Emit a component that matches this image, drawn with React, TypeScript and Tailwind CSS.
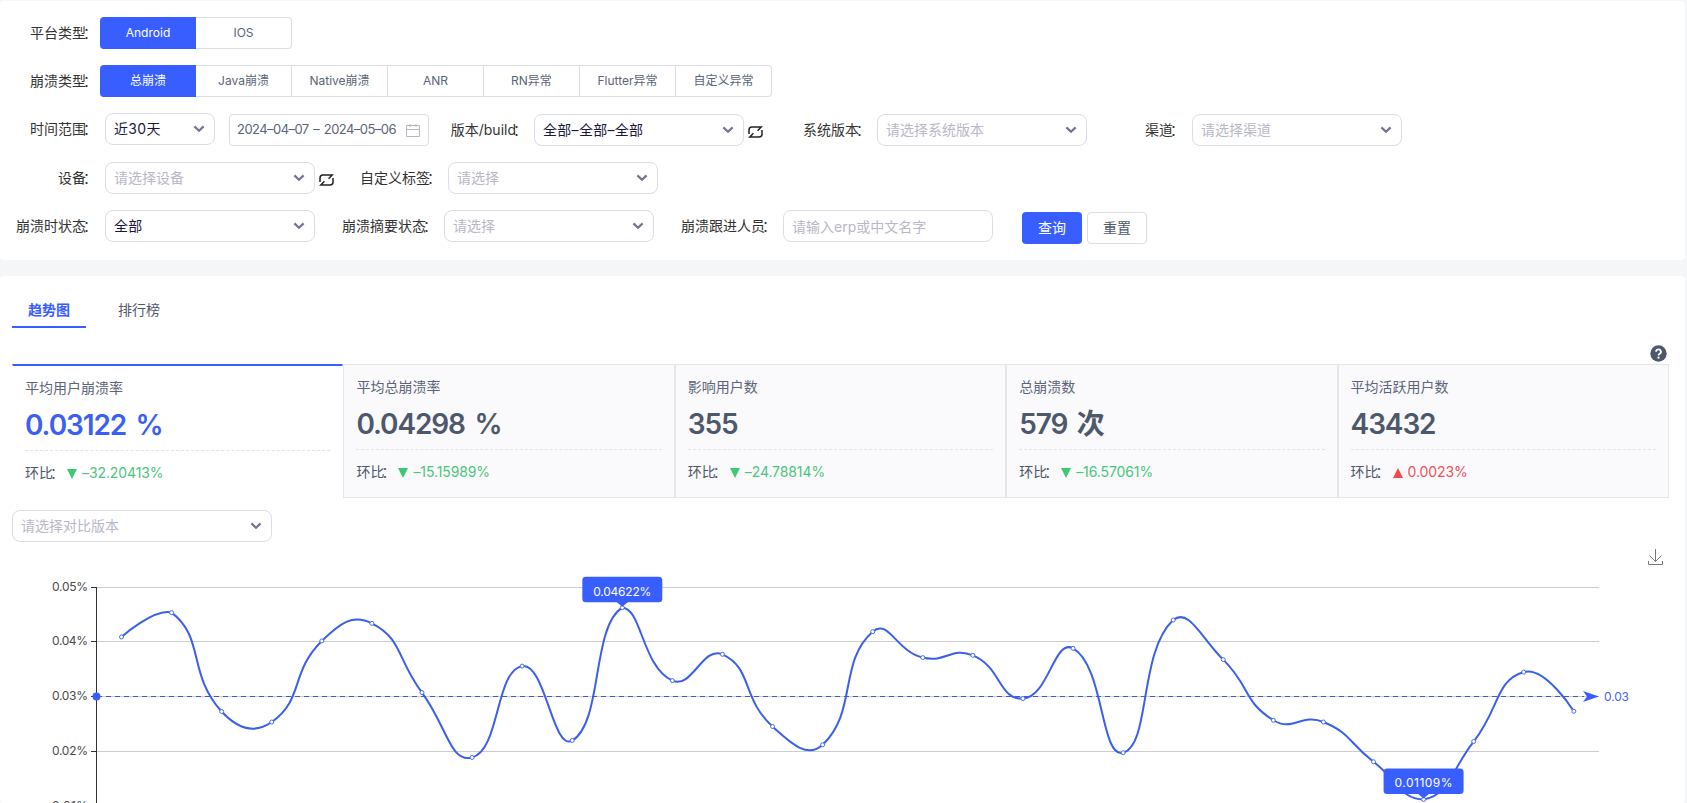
import type { ReactNode } from 'react';
import clsx from 'clsx';

const platforms = ['Android', 'IOS'];
const crashTypes = ['总崩溃', 'Java崩溃', 'Native崩溃', 'ANR', 'RN异常', 'Flutter异常', '自定义异常'];

const stats = [
  { title: '平均用户崩溃率', value: '0.03122 %', ratio: '–32.20413%', up: false },
  { title: '平均总崩溃率', value: '0.04298 %', ratio: '–15.15989%', up: false },
  { title: '影响用户数', value: '355', ratio: '–24.78814%', up: false },
  { title: '总崩溃数', value: '579 次', ratio: '–16.57061%', up: false },
  { title: '平均活跃用户数', value: '43432', ratio: '0.0023%', up: true },
];

const rates = [
  0.04085, 0.0453, 0.02719, 0.02527, 0.04012, 0.04334, 0.03067, 0.01878, 0.03551, 0.02188,
  0.04622, 0.03286, 0.03767, 0.02445, 0.0211, 0.04182, 0.03707, 0.03749, 0.02957, 0.03877,
  0.01964, 0.04396, 0.0367, 0.0256, 0.02527, 0.01799, 0.01109, 0.0217, 0.03442, 0.02725,
];

type Point = [number, number];

const toY = (rate: number) => 17 + (0.05 - rate) * 5460;
const points: Point[] = rates.map((rate, i) => [121.5 + i * 50.08, toY(rate)]);

// Bezier smoothing, control points are kept inside the bounding box of the data
function smoothPath(pts: Point[]) {
  const minY = Math.min(...pts.map((p) => p[1]));
  const maxY = Math.max(...pts.map((p) => p[1]));
  const clamp = (y: number) => Math.min(Math.max(y, minY), maxY);

  let d = `M${pts[0][0]},${pts[0][1]}`;
  let cp0: Point = pts[0];
  for (let i = 1; i < pts.length; i++) {
    const prev = pts[i - 1];
    const p = pts[i];
    const next = pts[i + 1];
    let cp1: Point = p;
    let nextCp0: Point = p;
    if (next) {
      const lenPrev = Math.hypot(p[0] - prev[0], p[1] - prev[1]);
      const lenNext = Math.hypot(next[0] - p[0], next[1] - p[1]);
      const ratio = lenNext / (lenNext + lenPrev);
      const vx = (next[0] - prev[0]) * 0.5;
      const vy = (next[1] - prev[1]) * 0.5;
      cp1 = [p[0] - vx * (1 - ratio), clamp(p[1] - vy * (1 - ratio))];
      nextCp0 = [p[0] + vx * ratio, clamp(p[1] + vy * ratio)];
    }
    d += `C${cp0[0]},${cp0[1]} ${cp1[0]},${cp1[1]} ${p[0]},${p[1]}`;
    cp0 = nextCp0;
  }
  return d;
}

function Colon() {
  return <span className="-ml-[3px] mr-[3px]">：</span>;
}

function Label({ children, className }: { children: ReactNode; className?: string }) {
  return (
    <span className={clsx('shrink-0 whitespace-nowrap text-right text-sm text-[#333333]', className)}>
      {children}
      <Colon />
    </span>
  );
}

function SegmentGroup({ items }: { items: string[] }) {
  return (
    <div className="flex h-8">
      {items.map((item, i) => (
        <button
          key={item}
          className={clsx(
            'w-24 border-y text-xs',
            i === 0
              ? 'rounded-l border-[#395eff] bg-[#395eff] text-white'
              : 'border-r border-[#dcdee2] bg-white text-[#5b6478]',
            i === items.length - 1 && 'rounded-r'
          )}
        >
          {item}
        </button>
      ))}
    </div>
  );
}

function Select({ value, placeholder, className }: { value?: string; placeholder?: string; className?: string }) {
  return (
    <div
      className={clsx(
        'flex h-8 shrink-0 items-center justify-between rounded-lg border border-[#dcdce6] bg-white pl-2 pr-[9px] text-sm',
        className
      )}
    >
      <span className={value ? 'tracking-[0.3px] text-[#1a1640]' : 'text-[#b8b8c6]'}>{value || placeholder}</span>
      <svg width="12" height="8" viewBox="0 0 12 8" fill="none">
        <path d="M1.4 1.4L6 5.8l4.6-4.4" stroke="#74758e" strokeWidth="2.2" />
      </svg>
    </div>
  );
}

function RefreshIcon() {
  return (
    <svg className="ml-1 mt-[3px] shrink-0" width="15" height="14" viewBox="0 0 15 14" fill="none" stroke="#222" strokeWidth="1.5">
      <path d="M1 9V5a3 3 0 0 1 3-3h9.2L9.6 5.8M14 5v4a3 3 0 0 1-3 3H1.8l3.6-3.8" />
    </svg>
  );
}

function Filters() {
  return (
    <section className="h-[259px] rounded-sm bg-white pl-4 pt-4">
      <div className="flex h-8 items-center">
        <Label className="w-[84px]">平台类型</Label>
        <SegmentGroup items={platforms} />
      </div>
      <div className="mt-4 flex h-8 items-center">
        <Label className="w-[84px]">崩溃类型</Label>
        <SegmentGroup items={crashTypes} />
      </div>
      <div className="mt-[17px] flex h-8 items-center">
        <Label className="-mt-0.5 w-[84px]">时间范围</Label>
        <Select value="近30天" className="-mt-0.5 ml-[5px] w-[110px]" />
        <div className="ml-3.5 flex h-8 w-[200px] items-center justify-between rounded border border-[#dcdee2] pl-[7px] pr-2">
          <span className="whitespace-nowrap text-[13px] tracking-[-0.55px] text-[#5b6478] [word-spacing:1.5px]">
            2024–04–07 – 2024–05–06
          </span>
          <svg width="14" height="13" viewBox="0 0 14 13" fill="none" stroke="#b4b9c2">
            <path d="M.5 1.5h13v11H.5zM.5 5.5h13M4 0v3M10 0v3" />
          </svg>
        </div>
        <Label className="mr-1 w-[101px]">版本/build</Label>
        <Select value="全部–全部–全部" className="w-[210px]" />
        <RefreshIcon />
        <Label className="w-[110px]">系统版本</Label>
        <Select placeholder="请选择系统版本" className="ml-1 w-[210px]" />
        <Label className="w-[100px]">渠道</Label>
        <Select placeholder="请选择渠道" className="ml-[5px] w-[210px]" />
      </div>
      <div className="mt-4 flex h-8 items-center">
        <Label className="w-[84px]">设备</Label>
        <Select placeholder="请选择设备" className="ml-[5px] w-[210px]" />
        <RefreshIcon />
        <Label className="w-[110px]">自定义标签</Label>
        <Select placeholder="请选择" className="ml-1 w-[210px]" />
      </div>
      <div className="mt-4 flex h-8 items-center">
        <Label className="w-[84px]">崩溃时状态</Label>
        <Select value="全部" className="ml-[5px] w-[210px]" />
        <Label className="w-[125px]">崩溃摘要状态</Label>
        <Select placeholder="请选择" className="ml-1 w-[210px]" />
        <Label className="w-[125px]">崩溃跟进人员</Label>
        <input
          className="ml-1 h-8 w-[210px] rounded-lg border border-[#dcdce6] px-2 text-sm placeholder:text-[#b8b8c6]"
          placeholder="请输入erp或中文名字"
        />
        <button className="ml-[29px] mt-1 h-8 w-[60px] rounded bg-[#395eff] text-sm text-white">查询</button>
        <button className="ml-[5px] mt-1 h-8 w-[60px] rounded border border-[#dcdee2] text-sm text-[#4e5969]">重置</button>
      </div>
    </section>
  );
}

function StatCard({ title, value, ratio, up, active }: (typeof stats)[number] & { active: boolean }) {
  return (
    <div
      className={clsx(
        'h-[134px] px-3',
        active
          ? 'border-x border-t-2 border-x-transparent border-t-[#395eff] bg-white'
          : 'border border-[#e6e6e8] bg-[#fafafc]'
      )}
    >
      <p className="mt-[11px] text-sm leading-[22px] text-[#5b6478]">{title}</p>
      <p
        className={clsx(
          'mt-[5px] border-b border-dashed border-[#e3e3e6] pb-1 text-[28px] leading-[42px] font-semibold tracking-[-1.1px] [word-spacing:3.5px]',
          active ? 'text-[#3b5ff5]' : 'text-[#4e586c]'
        )}
      >
        {value}
      </p>
      <div className="mt-[11px] flex items-center text-sm leading-[22px]">
        <span className="text-[#4e586c]">
          环比
          <Colon />
        </span>
        <svg className="mt-0.5 mr-[5px]" width="10" height="10" viewBox="0 0 10 10">
          {up ? <path d="M0 10L5 0l5 10z" fill="#f54a4a" /> : <path d="M0 0h10L5 10z" fill="#3dc873" />}
        </svg>
        <span className={clsx('tracking-[-0.1px]', up ? 'text-[#ea5354]' : 'text-[#4cc47b]')}>{ratio}</span>
      </div>
    </div>
  );
}

function Marker({ x, y, label }: { x: number; y: number; label: string }) {
  return (
    <g>
      <rect x={x - 40} y={y - 31} width="80" height="25.5" rx="3.5" fill="#395eff" />
      <path d={`M${x - 6},${y - 6}h12l-6,5z`} fill="#395eff" />
      <text x={x} y={y - 12} textAnchor="middle" fill="#fff" textLength="58">{label}</text>
    </g>
  );
}

function TrendChart() {
  const ticks = [0.05, 0.04, 0.03, 0.02, 0.01];
  const lines = [17.5, 71.5, 126.5, 181.5, 236];
  return (
    <svg className="block h-[233px] w-[1685px] text-xs" viewBox="0 0 1685 233">
      {lines.map((y, i) => (
        <g key={y}>
          <path d={`M97,${y}H1599`} stroke="#cccccc" />
          <path d={`M91,${y}h5`} stroke="#333" />
          <text x="88" y={y + 3.5} textAnchor="end" fill="#4a4a4a" textLength="36">{ticks[i]}%</text>
        </g>
      ))}
      <path d="M96.5,17V233" stroke="#333" />
      <path d={smoothPath(points)} fill="none" stroke="#3a5feb" strokeWidth="2" />
      {points.map(([x, y]) => (
        <circle key={x} cx={x} cy={y} r="2" fill="#fff" stroke="#4a6cf0" />
      ))}
      <path d="M97,126.5H1584" stroke="#3d5bd0" strokeDasharray="5 4" />
      <circle cx="96.5" cy="126.5" r="4" fill="#395eff" />
      <path d="M1583,121l16,5.5l-16,5.5l4,-5.5z" fill="#395eff" />
      <text x="1604" y="130.5" fill="#4464e4" textLength="25">0.03</text>
      <Marker x={points[10][0]} y={points[10][1]} label="0.04622%" />
      <Marker x={points[26][0]} y={points[26][1]} label="0.01109%" />
    </svg>
  );
}

function TrendPanel() {
  return (
    <section className="mt-4 h-[527px] overflow-hidden rounded-sm bg-white">
      <div className="ml-3 mt-[18px] flex h-[34px] text-sm">
        <button className="w-[74px] border-b-2 border-[#395eff] font-semibold text-[#395eff]">趋势图</button>
        <button className="ml-4 w-[74px] border-b-2 border-transparent text-[#4e5969]">排行榜</button>
      </div>
      <div className="mt-[17px] flex h-[19px] justify-end pr-[18px]">
        <svg width="17" height="17" viewBox="0 0 17 17">
          <circle cx="8.5" cy="8.5" r="8.2" fill="#4e586c" />
          <path d="M6.1 6.8a2.4 2.4 0 1 1 3.6 2c-.8.5-1.2.8-1.2 1.8" fill="none" stroke="#fff" strokeWidth="1.8" />
          <circle cx="8.5" cy="12.7" r="1.1" fill="#fff" />
        </svg>
      </div>
      <div className="ml-3 grid w-[1657px] grid-cols-5">
        {stats.map((stat, i) => (
          <StatCard key={stat.title} {...stat} active={i === 0} />
        ))}
      </div>
      <Select placeholder="请选择对比版本" className="ml-3 mt-3 w-[260px]" />
      <div className="flex h-7 justify-end pr-[22px] pt-[7px]">
        <svg width="15" height="17" viewBox="0 0 15 17" fill="none" stroke="#777">
          <path d="M7.5 0v12.5M1.5 6.5l6 6 6-6M.5 12v3.5h14V12" />
        </svg>
      </div>
      <TrendChart />
    </section>
  );
}

export default function App() {
  return (
    <div className="h-[803px] w-[1687px] overflow-hidden bg-[#f5f6f8] pr-0.5 pt-px font-[Inter,'Noto_Sans_CJK_SC',sans-serif]">
      <Filters />
      <TrendPanel />
    </div>
  );
}
